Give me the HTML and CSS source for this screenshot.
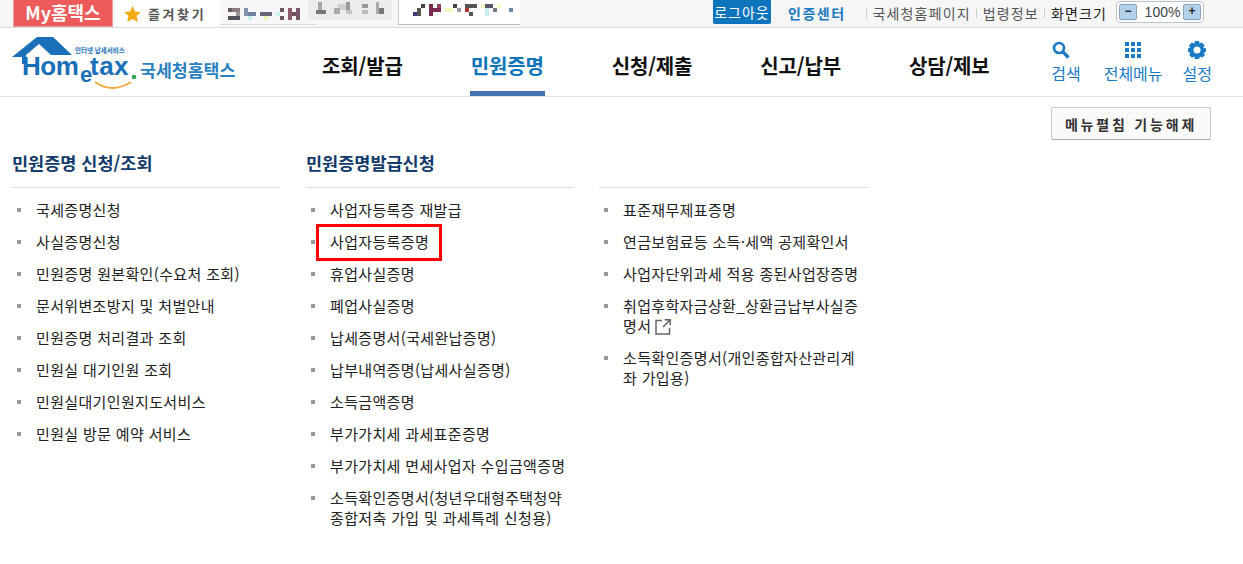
FILE: index.html
```html
<!DOCTYPE html>
<html lang="ko">
<head>
<meta charset="utf-8">
<title>국세청 홈택스</title>
<link rel="stylesheet" href="styles.css">
</head>
<body>
<div class="topbar">
  <div class="top-left">
    <a class="my-btn">My홈택스</a>
    <a class="fav">
      <svg class="star" width="17" height="16" viewBox="0 0 17 16"><path fill="#f5ab14" d="M8.500 0l2.500 5.400 6 .7-4.400 4 1.200 5.900-5.300-3-5.300 3 1.200-5.900L0 6.100l6-.7z"/></svg>
      <span>즐겨찾기</span>
    </a>
    <div class="mosaic-tab m1">
      <svg width="74" height="12" viewBox="0 0 74 12" shape-rendering="crispEdges"><rect x="0" y="0" width="4" height="4" fill="#6b5a6b"/><rect x="4" y="0" width="8" height="4" fill="#8a7a80"/><rect x="8" y="4" width="4" height="4" fill="#a09098"/><rect x="0" y="8" width="12" height="4" fill="#55505c"/><rect x="16" y="0" width="4" height="8" fill="#7f93ad"/><rect x="20" y="4" width="8" height="4" fill="#6e7f9c"/><rect x="20" y="8" width="4" height="4" fill="#c8eef0"/><rect x="32" y="4" width="12" height="4" fill="#667"/><rect x="36" y="8" width="4" height="4" fill="#f0f0b8"/><rect x="52" y="0" width="4" height="4" fill="#6a5a60"/><rect x="52" y="8" width="4" height="4" fill="#6a5a60"/><rect x="48" y="4" width="4" height="4" fill="#c8f0f0"/><rect x="60" y="0" width="4" height="12" fill="#8b5a68"/><rect x="64" y="4" width="4" height="4" fill="#6a5060"/><rect x="68" y="0" width="4" height="12" fill="#77566a"/></svg>
    </div>
    <div class="mosaic-tab m2">
      <svg width="68" height="14" viewBox="0 0 68 14" shape-rendering="crispEdges"><rect x="2" y="0" width="4" height="8" fill="#a8a8a8"/><rect x="0" y="8" width="10" height="4" fill="#777"/><rect x="22" y="2" width="8" height="6" fill="#d0d0d0"/><rect x="18" y="6" width="6" height="6" fill="#aaa"/><rect x="30" y="0" width="4" height="8" fill="#999"/><rect x="30" y="8" width="6" height="4" fill="#c4c4c4"/><rect x="46" y="2" width="6" height="4" fill="#999"/><rect x="46" y="8" width="6" height="4" fill="#bbb"/><rect x="60" y="0" width="3" height="12" fill="#aaa"/><rect x="63" y="6" width="5" height="6" fill="#777"/></svg>
    </div>
    <div class="mosaic-tab m3">
      <svg width="100" height="12" viewBox="0 0 100 12" shape-rendering="crispEdges"><rect x="0" y="8" width="4" height="4" fill="#3a3a7a"/><rect x="4" y="4" width="4" height="8" fill="#555"/><rect x="8" y="0" width="4" height="4" fill="#444"/><rect x="16" y="0" width="4" height="12" fill="#7a2a50"/><rect x="20" y="4" width="8" height="4" fill="#7a2a50"/><rect x="24" y="0" width="4" height="4" fill="#99405a"/><rect x="32" y="4" width="8" height="4" fill="#f7f7c0"/><rect x="40" y="0" width="4" height="4" fill="#445"/><rect x="44" y="4" width="4" height="4" fill="#99a"/><rect x="52" y="0" width="12" height="4" fill="#555"/><rect x="52" y="4" width="4" height="4" fill="#a33"/><rect x="56" y="8" width="4" height="4" fill="#555"/><rect x="68" y="0" width="4" height="4" fill="#f7f7c0"/><rect x="72" y="4" width="4" height="8" fill="#c8eef0"/><rect x="72" y="0" width="8" height="4" fill="#556"/><rect x="80" y="4" width="4" height="4" fill="#778"/><rect x="84" y="0" width="4" height="4" fill="#f7f7c0"/><rect x="96" y="4" width="4" height="4" fill="#68a"/></svg>
    </div>
  </div>
  <div class="top-right">
    <a class="logout">로그아웃</a>
    <a class="cert">인증센터</a>
    <a class="util">국세청홈페이지</a>
    <a class="util">법령정보</a>
    <span class="util dark">화면크기</span>
    <div class="zoom">
      <span class="zoom-btn">−</span>
      <span class="zoom-val">100%</span>
      <span class="zoom-btn">+</span>
    </div>
  </div>
</div>

<header class="header">
  <a class="logo">
    <svg width="226" height="56" viewBox="0 0 226 56">
      <path fill="#1a70b8" d="M0 24 L25 4 L41 4 L60 22 L39 22 L27 11 L14 22 V31 H10 V24 Z"/>
      <path fill="none" stroke="#f0a83a" stroke-width="1.800" d="M83 49 Q100 61 119 49"/>
      <circle cx="122" cy="44" r="2.300" fill="#2aa84a"/>
      <text x="63" y="20" class="logo-small">인터넷 납세서비스</text>
      <text x="10" y="42" class="logo-main">Hom</text>
      <text x="68" y="49" class="logo-e">e</text>
      <text x="78" y="42" class="logo-main logo-tax">tax</text>
      <text x="128" y="44" class="logo-ko">국세청홈택스</text>
    </svg>
  </a>
  <nav class="nav">
    <a class="nav-item">조회/발급</a>
    <a class="nav-item active">민원증명</a>
    <a class="nav-item">신청/제출</a>
    <a class="nav-item">신고/납부</a>
    <a class="nav-item">상담/제보</a>
  </nav>
  <div class="tools">
    <a class="tool tool-search">
      <svg width="18" height="18" viewBox="0 0 18 18"><circle cx="7" cy="7" r="5" fill="none" stroke="#1a7bc4" stroke-width="2.600"/><path d="M11 11l5.500 5.500" stroke="#1a7bc4" stroke-width="3.200"/></svg>
      <span>검색</span>
    </a>
    <a class="tool">
      <svg width="18" height="18" viewBox="0 0 18 18" fill="#1a7bc4" shape-rendering="crispEdges"><rect x="1" y="1" width="4" height="4"/><rect x="7" y="1" width="4" height="4"/><rect x="13" y="1" width="4" height="4"/><rect x="1" y="7" width="4" height="4"/><rect x="7" y="7" width="4" height="4"/><rect x="13" y="7" width="4" height="4"/><rect x="1" y="13" width="4" height="4"/><rect x="7" y="13" width="4" height="4"/><rect x="13" y="13" width="4" height="4"/></svg>
      <span>전체메뉴</span>
    </a>
    <a class="tool">
      <svg width="18" height="18" viewBox="0 0 18 18"><path fill="#1a7bc4" fill-rule="evenodd" d="M7 0h4l.6 2.600 2.400-1.200 2.700 3-1.500 2.200L18 7.500v3.500l-2.300.7 1.300 2.300-2.800 2.800-2.200-1.400L11 18H7l-.7-2.600-2.300 1.400-2.800-2.800 1.300-2.300L0 11V7.500l2.300-.9L.9 4.400l2.800-3 2.600 1.200zM9 5.500a3.500 3.500 0 1 0 0 7 3.500 3.500 0 0 0 0-7z"/></svg>
      <span>설정</span>
    </a>
  </div>
</header>

<div class="action-row">
  <button class="fold-btn">메뉴펼침 기능해제</button>
</div>

<main class="columns">
  <section class="col">
    <h2 class="col-title">민원증명 신청/조회</h2>
    <ul class="list">
      <li>국세증명신청</li>
      <li>사실증명신청</li>
      <li>민원증명 원본확인(수요처 조회)</li>
      <li>문서위변조방지 및 처벌안내</li>
      <li>민원증명 처리결과 조회</li>
      <li>민원실 대기인원 조회</li>
      <li>민원실대기인원지도서비스</li>
      <li>민원실 방문 예약 서비스</li>
    </ul>
  </section>
  <section class="col">
    <h2 class="col-title">민원증명발급신청</h2>
    <ul class="list">
      <li>사업자등록증 재발급</li>
      <li><span class="marked">사업자등록증명</span></li>
      <li>휴업사실증명</li>
      <li>폐업사실증명</li>
      <li>납세증명서(국세완납증명)</li>
      <li>납부내역증명(납세사실증명)</li>
      <li>소득금액증명</li>
      <li>부가가치세 과세표준증명</li>
      <li>부가가치세 면세사업자 수입금액증명</li>
      <li>소득확인증명서(청년우대형주택청약 종합저축 가입 및 과세특례 신청용)</li>
    </ul>
  </section>
  <section class="col col-last">
    <h2 class="col-title">&nbsp;</h2>
    <ul class="list">
      <li>표준재무제표증명</li>
      <li>연금보험료등 소득·세액 공제확인서</li>
      <li>사업자단위과세 적용 종된사업장증명</li>
      <li>취업후학자금상환_상환금납부사실증명서<svg class="ext" width="16" height="16" viewBox="0 0 16 16"><path fill="none" stroke="#666" stroke-width="1.500" d="M7 1.500H1v13.500h13.500V9M8 8l7-7M9.500 .8H15.200V6"/></svg></li>
      <li>소득확인증명서(개인종합자산관리계좌 가입용)</li>
    </ul>
  </section>
</main>
</body>
</html>
```
FILE: styles.css
```css
* { box-sizing: border-box; }
html, body { margin: 0; padding: 0; }
body {
  width: 1243px;
  height: 564px;
  overflow: hidden;
  background: #fff;
  color: #222;
  font-family: "Noto Sans CJK KR", "Liberation Sans", sans-serif;
}
a { color: inherit; text-decoration: none; }

/* top bar */
.topbar {
  height: 28px;
  display: flex;
  justify-content: space-between;
  background: #f6f6f6;
  border-bottom: 1px solid #dcdcdc;
}
.top-left { display: flex; padding-left: 13px; }
.my-btn {
  width: 100px;
  height: 27px;
  background: #ec5a5a;
  color: #fff;
  font: bold 18px/25px "Noto Sans CJK KR", sans-serif;
  text-align: center;
  border: 1px solid #e8a0a0;
  border-top: 0;
}
.fav {
  width: 107px;
  height: 27px;
  background: #fff;
  display: flex;
  align-items: center;
  padding-left: 11px;
  gap: 7px;
  color: #555;
  font-size: 13px;
  font-weight: 700;
  letter-spacing: 2.600px;
}
.star { flex: none; }
.mosaic-tab { display: flex; }
.m1 { width: 96px; height: 25px; padding: 8px 0 0 8px; background: #f6f6f6; border-bottom: 1px solid #ddd; }
.m2 { width: 84px; height: 20px; margin-left: -8px; margin-right: 6px; padding: 2px 0 0 8px; background: #ececec; }
.m3 { width: 122px; height: 25px; padding: 4px 0 0 14px; background: #fff; border-bottom: 1px solid #bbb; border-left: 1px solid #ccc; }

.top-right { display: flex; align-items: flex-start; padding-right: 39px; }
.logout {
  width: 58px;
  height: 24px;
  background: #0e75bc;
  color: #fff;
  font-size: 14px;
  line-height: 24px;
  text-align: center;
  border-radius: 0 0 2px 2px;
  letter-spacing: 1px;
  margin-right: 17px;
}
.cert {
  color: #1a78c2;
  font-size: 14px;
  font-weight: 700;
  line-height: 27px;
  letter-spacing: 1.500px;
  margin-right: 27px;
}
.util {
  font-size: 14px;
  line-height: 27px;
  color: #555;
  letter-spacing: 1.150px;
  margin-right: 12px;
  position: relative;
}
.util::before {
  content: "";
  position: absolute;
  left: -7px;
  top: 9px;
  height: 9px;
  width: 1px;
  background: #ccc;
}
.util.dark { color: #222; margin-right: 9px; }
.zoom {
  width: 88px;
  height: 22px;
  margin-top: 1px;
  display: flex;
  align-items: center;
  justify-content: space-between;
  padding: 0 2px;
  background: #fff;
  border: 1px solid #bcc4d0;
  border-radius: 4px;
}
.zoom-btn {
  width: 18px;
  height: 16px;
  background: #b4cfe8;
  border: 1px solid #8aa4c0;
  border-radius: 2px;
  color: #222;
  font: bold 12px/13px "Liberation Sans", sans-serif;
  text-align: center;
}
.zoom-val {
  margin-left: 5px;
  font: 14px/20px "Liberation Sans", sans-serif;
  color: #444;
}

/* header */
.header {
  height: 69px;
  display: flex;
  border-bottom: 1px solid #e2e2e2;
  padding: 0 31px 0 12px;
}
.logo { width: 226px; height: 56px; margin-top: 5px; flex: none; }
.logo-small { font: 700 6.500px "Noto Sans CJK KR", sans-serif; fill: #1a70b8; }
.logo-main { font: 700 26px "Liberation Sans", sans-serif; fill: #1a70b8; letter-spacing: -.5px; }
.logo-tax { letter-spacing: .5px; }
.logo-e { font: 700 22px "Liberation Sans", sans-serif; fill: #1a70b8; }
.logo-ko { font: 700 17.300px "Noto Sans CJK KR", sans-serif; fill: #2a7fc0; }
.nav {
  display: flex;
  gap: 66px;
  margin-left: 83px;
}
.nav-item {
  height: 68px;
  padding: 0 1px;
  font-size: 20px;
  font-weight: 700;
  line-height: 75px;
  letter-spacing: -.15px;
  color: #111;
}
.nav-item.active {
  color: #0e75bc;
  border-bottom: 5px solid #4474b0;
}
.tools {
  display: flex;
  gap: 20px;
  margin-left: auto;
  padding-top: 13px;
}
.tool {
  display: flex;
  flex-direction: column;
  align-items: center;
  gap: 4px;
  color: #1a7bc4;
  font-size: 16px;
  line-height: 20px;
}
.tool-search { margin-right: 3px; }
.tool-search svg { margin-right: 9px; }

/* action row */
.action-row {
  display: flex;
  justify-content: flex-end;
  padding: 10px 32px 0 0;
  height: 42px;
}
.fold-btn {
  width: 160px;
  height: 33px;
  background: #fafafa;
  border: 1px solid #c8c8c8;
  border-bottom-color: #aaa;
  border-radius: 2px;
  color: #333;
  font: 700 14px "Noto Sans CJK KR", sans-serif;
  letter-spacing: 2.800px;
  padding: 0;
}

/* columns */
.columns {
  display: flex;
  gap: 26px;
  padding-left: 12px;
}
.col { width: 268px; }
.col-last { margin-left: -1px; width: 269px; }
.col-title {
  margin: 0;
  height: 49px;
  padding-top: 12px;
  font-size: 17.500px;
  font-weight: 700;
  line-height: 24px;
  color: #123a6b;
  border-bottom: 1px solid #ddd;
}
.list {
  list-style: none;
  margin: 0;
  padding: 12px 0 0;
  display: flex;
  flex-direction: column;
  gap: 12px;
}
.list li {
  position: relative;
  padding-left: 24px;
  font-size: 15px;
  line-height: 20px;
  letter-spacing: .35px;
  color: #222;
  word-break: break-all;
}
.list li::before {
  content: "";
  position: absolute;
  left: 5px;
  top: 8px;
  width: 4px;
  height: 4px;
  background: #999;
}
.marked { position: relative; display: inline-block; }
.marked::after {
  content: "";
  position: absolute;
  left: -14px;
  right: -13px;
  top: -8px;
  bottom: -9px;
  border: 3px solid #f00;
}
.ext { vertical-align: -3px; margin-left: 4px; }
```
